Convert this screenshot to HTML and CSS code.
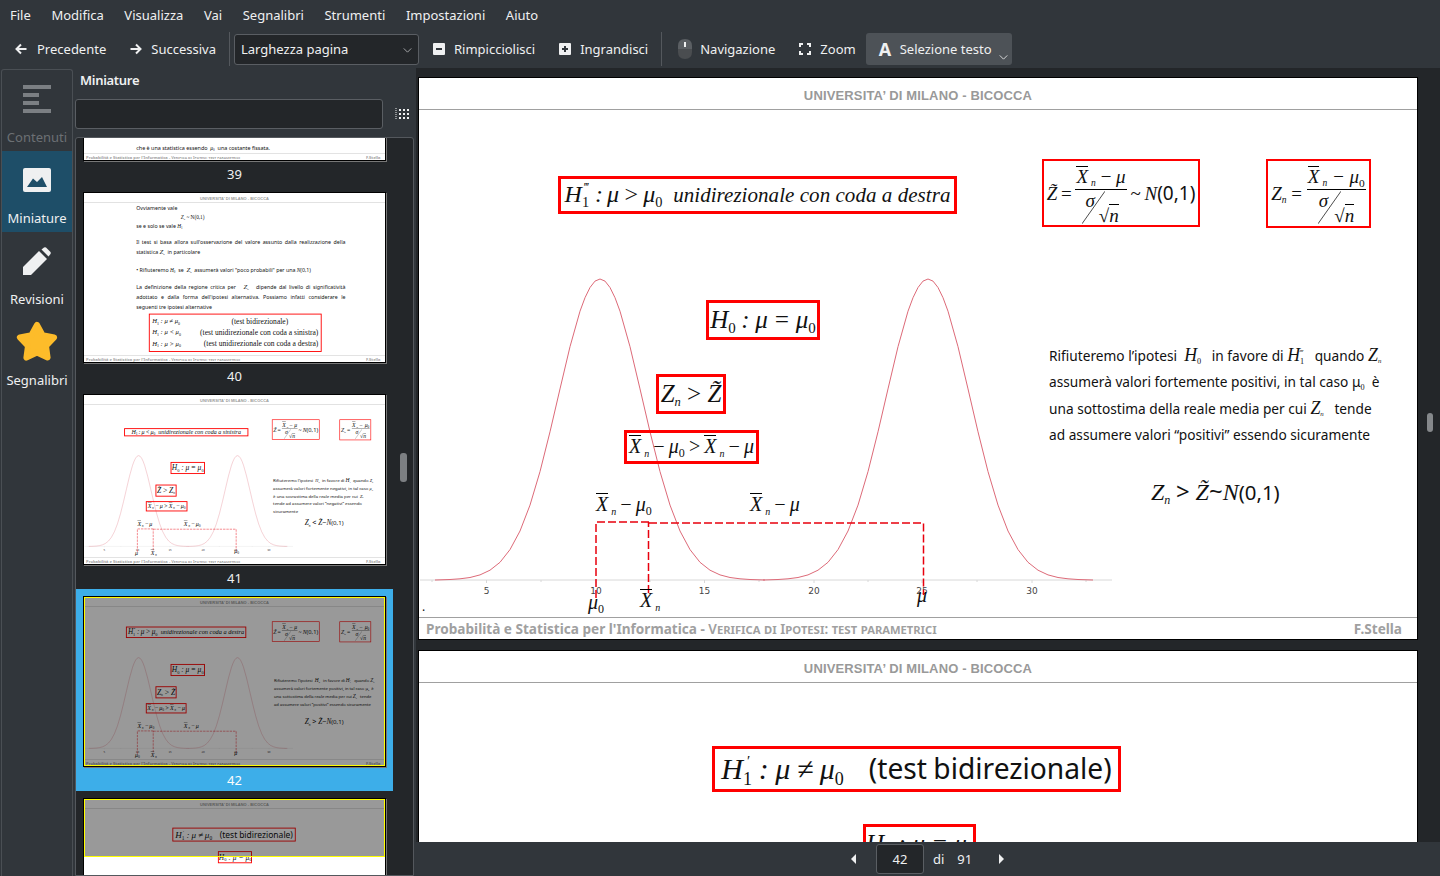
FILE: index.html
```html
<!DOCTYPE html>
<html lang="it">
<head>
    <meta charset="UTF-8">
    <meta name="viewport" content="width=device-width, initial-scale=1.0">
    <title>Okular</title>
    <link rel="stylesheet" href="styles.css">
</head>
<body>
    <svg class="defs" width="0" height="0">
        <defs>
            <path id="bell" d="M-165 0L-150-.5L-140-1.2L-130-2.5L-120-5.1L-110-9.8L-100-17.7L-90-30.4L-80-49L-70-74.9L-60-108.4L-50-148.2L-40-191.1L-30-233.3L-20-268.8L-15-282.3L-10-292.5L-5-298.9L0-301L5-298.9L10-292.5L15-282.3L20-268.8L30-233.3L40-191.1L50-148.2L60-108.4L70-74.9L80-49L90-30.4L100-17.7L110-9.8L120-5.1L130-2.5L140-1.2L150-.5L165 0"/>
            <g id="plot">
                <path class="axis" d="M1 502H693M13 502v2M67.500 502v3M122 502v2M177 502v3M231 502v2M285.500 502v3M340 502v2M395 502v3M449 502v2M503 502v3M558 502v2M613 502v3M667 502v2"/>
                <use class="curve" href="#bell" x="181" y="502"/>
                <use class="curve" href="#bell" x="509" y="502"/>
                <text class="tick" x="67.500" y="516">5</text>
                <text class="tick" x="177" y="516">10</text>
                <text class="tick" x="285.500" y="516">15</text>
                <text class="tick" x="395" y="516">20</text>
                <text class="tick" x="503" y="516">25</text>
                <text class="tick" x="613" y="516">30</text>
                <path class="dash" d="M177 520V444H230M229.500 515V444M230 445H504.500V517"/>
            </g>
        </defs>
    </svg>

    <nav class="menubar">
        <span>File</span><span>Modifica</span><span>Visualizza</span><span>Vai</span><span>Segnalibri</span><span>Strumenti</span><span>Impostazioni</span><span>Aiuto</span>
    </nav>

    <div class="toolbar">
        <div class="tool tool-prev">
            <svg class="ico" viewBox="0 0 12 12"><path class="ico-line" d="M11.500 6H1.500M6 1.500L1.500 6L6 10.500"/></svg>
            Precedente
        </div>
        <div class="tool tool-next">
            <svg class="ico" viewBox="0 0 12 12"><path class="ico-line" d="M.5 6H10.500M6 1.500L10.500 6L6 10.500"/></svg>
            Successiva
        </div>
        <i class="sep"></i>
        <div class="combo">Larghezza pagina
            <svg class="combo-arrow" viewBox="0 0 10 6"><path d="M.5 .5L5 5L9.500 .5"/></svg>
        </div>
        <div class="tool tool-minus">
            <svg class="ico" viewBox="0 0 12 12"><rect class="ico-fill" width="12" height="12" rx="1"/><rect class="ico-cut" x="3" y="5" width="6" height="2"/></svg>
            Rimpicciolisci
        </div>
        <div class="tool tool-plus">
            <svg class="ico" viewBox="0 0 12 12"><rect class="ico-fill" width="12" height="12" rx="1"/><path class="ico-cut" d="M3 5H5V3H7V5H9V7H7V9H5V7H3Z"/></svg>
            Ingrandisci
        </div>
        <i class="sep sep-two"></i>
        <div class="tool tool-nav">
            <svg class="ico-mouse" viewBox="0 0 14 20"><path class="mouse-top" d="M0 10V7Q0 0 7 0T14 7V10Z"/><path class="mouse-low" d="M0 10H14V13Q14 20 7 20T0 13Z"/><rect class="ico-fill" x="6" y="3" width="2" height="5"/></svg>
            Navigazione
        </div>
        <div class="tool tool-zoom">
            <svg class="ico" viewBox="0 0 12 12"><path class="ico-line" d="M4 1H1V4M8 1H11V4M4 11H1V8M8 11H11V8"/></svg>
            Zoom
        </div>
        <div class="tool tool-select">
            <span class="glyph-a">A</span>
            Selezione testo
            <svg class="select-arrow" viewBox="0 0 10 6"><path d="M.5 .5L5 5L9.500 .5"/></svg>
        </div>
    </div>

    <div class="main">
        <aside class="sidebar">
            <div class="side-tab is-off">
                <svg class="side-ico" viewBox="0 0 28 28"><path class="toc" d="M0 0H28V4H0ZM0 8H16V12H0ZM0 16H16V20H0ZM0 24H28V28H0Z"/></svg>
                <span>Contenuti</span>
            </div>
            <div class="side-tab is-on">
                <svg class="side-ico side-ico-img" viewBox="0 0 28 24"><rect class="ico-fill" width="28" height="24" rx="2"/><path class="img-cut" d="M4 19L10 10.500L14 14L19 9L24 19Z"/></svg>
                <span>Miniature</span>
            </div>
            <div class="side-tab">
                <svg class="side-ico" viewBox="0 0 28 28"><path class="ico-fill" d="M0 28V20L16 4L24 12L8 28Z"/><path class="ico-fill" d="M18.500 2.500L21 .5Q22 0 23 .5L27.500 5Q28 6 27.500 7L25.500 9.500Z"/></svg>
                <span>Revisioni</span>
            </div>
            <div class="side-tab tab-star">
                <svg class="side-star" viewBox="0 0 42 43"><polygon class="star" points="21,5 26.600,15.300 38.100,17.400 30,25.900 31.600,37.600 21,32.500 10.400,37.600 12,25.900 3.900,17.400 15.400,15.300"/></svg>
                <span>Segnalibri</span>
            </div>
        </aside>

        <section class="panel">
            <h2 class="panel-title">Miniature</h2>
            <div class="search-row">
                <div class="search-box"></div>
                <svg class="grid-ico" viewBox="0 0 14 12"><path d="M1 0V1M1 2V3M1 4V5M1 6V7M1 8V9M1 10V11" class="grid-dots"/><path class="ico-fill" d="M4 1H6V3H4ZM8 1H10V3H8ZM12 1H14V3H12ZM4 5H6V7H4ZM8 5H10V7H8ZM12 5H14V7H12ZM4 9H6V11H4ZM8 9H10V11H8ZM12 9H14V11H12Z"/></svg>
            </div>

            <div class="thumbs">
                <div class="thumb-list">
                    <div class="thumb-item">
                        <div class="thumb">
                            <div class="slide">
                                <p class="t39">che è una statistica essendo &nbsp;<span class="m">μ</span><sub class="sn">0</sub>&nbsp; una costante fissata.</p>
                                <div class="slide-foot"><span>Probabilità e Statistica per l'Informatica - <span class="caps">Verifica di Ipotesi: test parametrici</span></span><span>F.Stella</span></div>
                            </div>
                        </div>
                        <div class="thumb-num">39</div>
                    </div>

                    <div class="thumb-item">
                        <div class="thumb">
                            <div class="slide">
                                <div class="slide-head">UNIVERSITA’ DI MILANO - BICOCCA</div>
                                <div class="t40">
                                    <p class="t40-tight">Ovviamente vale</p>
                                    <p class="t40-tight t40-mid"><span class="m">Z</span><sub class="sn m">n</sub> ~ N(0,1)</p>
                                    <p class="t40-tight">se e solo se vale <span class="m">H</span><sub class="sn">1</sub></p>
                                    <p class="t40-gap t40-just">Il test si basa allora sull'osservazione del valore assunto dalla realizzazione della</p>
                                    <p>statistica <span class="m big">Z</span><sub class="sn m">n</sub> &nbsp;in particolare</p>
                                    <p class="t40-low">• Rifiuteremo <span class="m">H</span><sub class="sn">0</sub> &nbsp;se &nbsp;<span class="m big">Z</span><sub class="sn m">n</sub> &nbsp;assumerà valori "poco probabili" per una <span class="m">N</span>(0,1)</p>
                                    <p class="t40-gap t40-just">La definizione della regione critica per &nbsp;&nbsp;<span class="m big">Z</span><sub class="sn m">n</sub> &nbsp;&nbsp;dipende dal livello di significatività</p>
                                    <p class="t40-just">adottato e dalla forma dell'ipotesi alternativa. Possiamo infatti considerare le</p>
                                    <p>seguenti tre ipotesi alternative</p>
                                </div>
                                <div class="fbox t40-box">
                                    <p class="t40-row"><span><span class="m">H</span><sub class="sn">1</sub><span class="m"> : μ ≠ μ</span><sub class="sn">0</sub></span><span class="t40-c t40-one">(test bidirezionale)</span></p>
                                    <p class="t40-row"><span><span class="m">H</span><sub class="sn">1</sub><span class="m"> : μ &lt; μ</span><sub class="sn">0</sub></span><span class="t40-c">(test unidirezionale con coda a sinistra)</span></p>
                                    <p class="t40-row"><span><span class="m">H</span><sub class="sn">1</sub><span class="m"> : μ &gt; μ</span><sub class="sn">0</sub></span><span class="t40-c">(test unidirezionale con coda a destra)</span></p>
                                </div>
                                <div class="slide-foot"><span>Probabilità e Statistica per l'Informatica - <span class="caps">Verifica di Ipotesi: test parametrici</span></span><span>F.Stella</span></div>
                            </div>
                        </div>
                        <div class="thumb-num">40</div>
                    </div>

                    <div class="thumb-item">
                        <div class="thumb">
                            <div class="slide">
                                <div class="slide-head">UNIVERSITA’ DI MILANO - BICOCCA</div>
                                <svg class="plot" viewBox="0 0 998 561"><use href="#plot"/></svg>
                                <div class="fbox f-top f-top-left"><span class="m">H</span><sub class="sn">1</sub><span class="m">&nbsp;: μ &lt; μ</span><sub class="sn">0</sub><span class="m words">&nbsp; unidirezionale con coda a sinistra</span></div>
                                <div class="fbox f-tilde"><span class="m">Z̃</span>&nbsp;=&nbsp;<span class="frac"><span class="num"><span class="m bar">X</span><sub class="sn m">n</sub><span class="m">&nbsp;− μ</span></span><span class="den"><span class="m">σ</span><span class="root">√<span class="m radic">n</span></span><svg class="slash" viewBox="0 0 24 34"><path d="M24 0L0 34"/></svg></span></span>&nbsp;~&nbsp;<span class="m">N</span><span class="paren">(0,1)</span></div>
                                <div class="fbox f-zn"><span class="m">Z</span><sub class="sn m">n</sub>&nbsp;=&nbsp;<span class="frac"><span class="num"><span class="m bar">X</span><sub class="sn m">n</sub><span class="m">&nbsp;− μ</span><sub class="sn">0</sub></span><span class="den"><span class="m">σ</span><span class="root">√<span class="m radic">n</span></span><svg class="slash" viewBox="0 0 24 34"><path d="M24 0L0 34"/></svg></span></span></div>
                                <div class="fbox f-h0"><span class="m">H</span><sub class="sn">0</sub><span class="m">&nbsp;: μ = μ</span><sub class="sn">0</sub></div>
                                <div class="fbox f-zgt f-zgt-left"><span class="m">Z̃</span>&nbsp;&gt;&nbsp;<span class="m">Z</span><sub class="sn m">n</sub></div>
                                <div class="fbox f-x f-x-left"><span class="m bar">X</span><sub class="sn m">n</sub><span class="m">&nbsp;− μ &gt;&nbsp;</span><span class="m bar">X</span><sub class="sn m">n</sub><span class="m">&nbsp;− μ</span><sub class="sn">0</sub></div>
                                <div class="lab lab-a"><span class="m bar">X</span><sub class="sn m">n</sub><span class="m">&nbsp;− μ</span></div>
                                <div class="lab lab-b"><span class="m bar">X</span><sub class="sn m">n</sub><span class="m">&nbsp;− μ</span><sub class="sn">0</sub></div>
                                <div class="lab lab-c"><span class="m">μ</span></div>
                                <div class="lab lab-d"><span class="m bar">X</span><sub class="sn m">n</sub></div>
                                <div class="lab lab-e"><span class="m">μ</span><sub class="sn">0</sub></div>
                                <p class="para para-left">Rifiuteremo l’ipotesi &nbsp;<span class="m">H</span><sub class="sn">0</sub>&nbsp; in favore di <span class="m big">H</span><sub class="sn">1</sub> &nbsp;quando <span class="m">Z</span><sub class="sn m">n</sub><br>assumerà valori fortemente negativi, in tal caso <span class="m">μ</span><sub class="sn">0</sub><br>è una sovrastima della reale media per cui &nbsp;<span class="m">Z</span><sub class="sn m">n</sub><br>tende ad assumere valori “negativi” essendo<br>sicuramente</p>
                                <div class="lab f-end f-end-left"><span class="m">Z</span><sub class="sn m">n</sub>&nbsp;&lt;&nbsp;<span class="m">Z̃</span>~<span class="m">N</span><span class="paren">(0,1)</span></div>
                                <div class="slide-foot"><span>Probabilità e Statistica per l'Informatica - <span class="caps">Verifica di Ipotesi: test parametrici</span></span><span>F.Stella</span></div>
                            </div>
                        </div>
                        <div class="thumb-num">41</div>
                    </div>

                    <div class="thumb-item is-current">
                        <div class="thumb">
                            <div class="slide">
                                <div class="slide-head">UNIVERSITA’ DI MILANO - BICOCCA</div>
                                <svg class="plot" viewBox="0 0 998 561"><use href="#plot"/></svg>
                                <div class="fbox f-top"><span class="m">H</span><sub class="sn">1</sub><sup class="primes">‴</sup><span class="m">&nbsp;: μ &gt; μ</span><sub class="sn">0</sub><span class="m words">&nbsp; unidirezionale con coda a destra</span></div>
                                <div class="fbox f-tilde"><span class="m">Z̃</span>&nbsp;=&nbsp;<span class="frac"><span class="num"><span class="m bar">X</span><sub class="sn m">n</sub><span class="m">&nbsp;− μ</span></span><span class="den"><span class="m">σ</span><span class="root">√<span class="m radic">n</span></span><svg class="slash" viewBox="0 0 24 34"><path d="M24 0L0 34"/></svg></span></span>&nbsp;~&nbsp;<span class="m">N</span><span class="paren">(0,1)</span></div>
                                <div class="fbox f-zn"><span class="m">Z</span><sub class="sn m">n</sub>&nbsp;=&nbsp;<span class="frac"><span class="num"><span class="m bar">X</span><sub class="sn m">n</sub><span class="m">&nbsp;− μ</span><sub class="sn">0</sub></span><span class="den"><span class="m">σ</span><span class="root">√<span class="m radic">n</span></span><svg class="slash" viewBox="0 0 24 34"><path d="M24 0L0 34"/></svg></span></span></div>
                                <div class="fbox f-h0"><span class="m">H</span><sub class="sn">0</sub><span class="m">&nbsp;: μ = μ</span><sub class="sn">0</sub></div>
                                <div class="fbox f-zgt"><span class="m">Z</span><sub class="sn m">n</sub>&nbsp;&gt;&nbsp;<span class="m">Z̃</span></div>
                                <div class="fbox f-x"><span class="m bar">X</span><sub class="sn m">n</sub><span class="m">&nbsp;− μ</span><sub class="sn">0</sub><span class="m">&nbsp;&gt;&nbsp;</span><span class="m bar">X</span><sub class="sn m">n</sub><span class="m">&nbsp;− μ</span></div>
                                <div class="lab lab-a"><span class="m bar">X</span><sub class="sn m">n</sub><span class="m">&nbsp;− μ</span><sub class="sn">0</sub></div>
                                <div class="lab lab-b"><span class="m bar">X</span><sub class="sn m">n</sub><span class="m">&nbsp;− μ</span></div>
                                <div class="lab lab-c"><span class="m">μ</span><sub class="sn">0</sub></div>
                                <div class="lab lab-d"><span class="m bar">X</span><sub class="sn m">n</sub></div>
                                <div class="lab lab-e"><span class="m">μ</span></div>
                                <p class="para">Rifiuteremo l’ipotesi &nbsp;<span class="m big">H</span><sub class="sn">0</sub>&nbsp;&nbsp; in favore di <span class="m big">H</span><sub class="sn">1</sub><sup class="primes">‴</sup> quando <span class="m big">Z</span><sub class="sn m">n</sub><br>assumerà valori fortemente positivi, in tal caso μ<sub class="sn">0</sub>&nbsp; è<br>una sottostima della reale media per cui <span class="m big">Z</span><sub class="sn m">n</sub>&nbsp;&nbsp; tende<br>ad assumere valori “positivi” essendo sicuramente</p>
                                <div class="lab f-end"><span class="m">Z</span><sub class="sn m">n</sub>&nbsp;&gt;&nbsp;<span class="m">Z̃</span>~<span class="m">N</span><span class="paren">(0,1)</span></div>
                                <div class="slide-foot"><span>Probabilità e Statistica per l'Informatica - <span class="caps">Verifica di Ipotesi: test parametrici</span></span><span>F.Stella</span></div>
                            </div>
                            <div class="shade"></div>
                        </div>
                        <div class="thumb-num">42</div>
                    </div>

                    <div class="thumb-item">
                        <div class="thumb">
                            <div class="slide">
                                <div class="slide-head">UNIVERSITA’ DI MILANO - BICOCCA</div>
                                <div class="fbox f-bid"><span class="m">H</span><sub class="sn">1</sub><sup class="primes">′</sup><span class="m">&nbsp;: μ ≠ μ</span><sub class="sn">0</sub><span class="bid-text">(test bidirezionale)</span></div>
                                <div class="fbox f-h0b"><span class="m">H</span><sub class="sn">0</sub><span class="m">&nbsp;: μ = μ</span><sub class="sn">0</sub></div>
                            </div>
                            <div class="shade shade-part"></div>
                        </div>
                    </div>
                </div>
                <div class="thumbs-scroll"></div>
            </div>
        </section>

        <main class="viewer">
            <div class="pages">
                <div class="page">
                    <div class="slide">
                        <div class="slide-head">UNIVERSITA’ DI MILANO - BICOCCA</div>
                        <svg class="plot" viewBox="0 0 998 561"><use href="#plot"/></svg>
                        <div class="fbox f-top"><span class="m">H</span><sub class="sn">1</sub><sup class="primes">‴</sup><span class="m">&nbsp;: μ &gt; μ</span><sub class="sn">0</sub><span class="m words">&nbsp; unidirezionale con coda a destra</span></div>
                        <div class="fbox f-tilde"><span class="m">Z̃</span>&nbsp;=&nbsp;<span class="frac"><span class="num"><span class="m bar">X</span><sub class="sn m">n</sub><span class="m">&nbsp;− μ</span></span><span class="den"><span class="m">σ</span><span class="root">√<span class="m radic">n</span></span><svg class="slash" viewBox="0 0 24 34"><path d="M24 0L0 34"/></svg></span></span>&nbsp;~&nbsp;<span class="m">N</span><span class="paren">(0,1)</span></div>
                        <div class="fbox f-zn"><span class="m">Z</span><sub class="sn m">n</sub>&nbsp;=&nbsp;<span class="frac"><span class="num"><span class="m bar">X</span><sub class="sn m">n</sub><span class="m">&nbsp;− μ</span><sub class="sn">0</sub></span><span class="den"><span class="m">σ</span><span class="root">√<span class="m radic">n</span></span><svg class="slash" viewBox="0 0 24 34"><path d="M24 0L0 34"/></svg></span></span></div>
                        <div class="fbox f-h0"><span class="m">H</span><sub class="sn">0</sub><span class="m">&nbsp;: μ = μ</span><sub class="sn">0</sub></div>
                        <div class="fbox f-zgt"><span class="m">Z</span><sub class="sn m">n</sub>&nbsp;&gt;&nbsp;<span class="m">Z̃</span></div>
                        <div class="fbox f-x"><span class="m bar">X</span><sub class="sn m">n</sub><span class="m">&nbsp;− μ</span><sub class="sn">0</sub><span class="m">&nbsp;&gt;&nbsp;</span><span class="m bar">X</span><sub class="sn m">n</sub><span class="m">&nbsp;− μ</span></div>
                        <div class="lab lab-a"><span class="m bar">X</span><sub class="sn m">n</sub><span class="m">&nbsp;− μ</span><sub class="sn">0</sub></div>
                        <div class="lab lab-b"><span class="m bar">X</span><sub class="sn m">n</sub><span class="m">&nbsp;− μ</span></div>
                        <div class="lab lab-c"><span class="m">μ</span><sub class="sn">0</sub></div>
                        <div class="lab lab-d"><span class="m bar">X</span><sub class="sn m">n</sub></div>
                        <div class="lab lab-e"><span class="m">μ</span></div>
                        <div class="dot">.</div>
                        <p class="para">Rifiuteremo l’ipotesi &nbsp;<span class="m big">H</span><sub class="sn">0</sub>&nbsp;&nbsp; in favore di <span class="m big">H</span><sub class="sn">1</sub><sup class="primes">‴</sup> quando <span class="m big">Z</span><sub class="sn m">n</sub><br>assumerà valori fortemente positivi, in tal caso μ<sub class="sn">0</sub>&nbsp; è<br>una sottostima della reale media per cui <span class="m big">Z</span><sub class="sn m">n</sub>&nbsp;&nbsp; tende<br>ad assumere valori “positivi” essendo sicuramente</p>
                        <div class="lab f-end"><span class="m">Z</span><sub class="sn m">n</sub>&nbsp;&gt;&nbsp;<span class="m">Z̃</span>~<span class="m">N</span><span class="paren">(0,1)</span></div>
                        <div class="slide-foot"><span>Probabilità e Statistica per l'Informatica - <span class="caps">Verifica di Ipotesi: test parametrici</span></span><span>F.Stella</span></div>
                    </div>
                </div>
                <div class="page">
                    <div class="slide">
                        <div class="slide-head">UNIVERSITA’ DI MILANO - BICOCCA</div>
                        <div class="fbox f-bid"><span class="m">H</span><sub class="sn">1</sub><sup class="primes">′</sup><span class="m">&nbsp;: μ ≠ μ</span><sub class="sn">0</sub><span class="bid-text">(test bidirezionale)</span></div>
                        <div class="fbox f-h0b"><span class="m">H</span><sub class="sn">0</sub><span class="m">&nbsp;: μ = μ</span><sub class="sn">0</sub></div>
                    </div>
                </div>
                <div class="view-scroll"></div>
            </div>
            <div class="pagebar">
                <svg class="pg-arrow" viewBox="0 0 5 10"><path d="M5 0V10L0 5Z"/></svg>
                <div class="pg-input">42</div>
                <span class="pg-di">di</span>
                <span class="pg-total">91</span>
                <svg class="pg-arrow pg-next" viewBox="0 0 5 10"><path d="M0 0V10L5 5Z"/></svg>
            </div>
        </main>
    </div>
</body>
</html>
```

FILE: styles.css
```css
/* General reset */
* {
    margin: 0;
    padding: 0;
    box-sizing: border-box;
}

body {
    width: 1440px;
    height: 876px;
    overflow: hidden;
    background: #31363b;
    color: #eff0f1;
    font-family: 'Noto Sans', sans-serif;
    font-size: 13px;
}

.defs {
    position: absolute;
}

/* Menu bar */
.menubar {
    display: flex;
    gap: 20.600px;
    height: 30px;
    padding-left: 10px;
    align-items: center;
}

/* Toolbar */
.toolbar {
    display: flex;
    align-items: center;
    height: 38px;
}

.tool {
    display: flex;
    align-items: center;
    gap: 10px;
    height: 32px;
    white-space: nowrap;
}

.tool-prev { margin-left: 15px; }
.tool-next { margin-left: 24px; gap: 9px; }
.tool-minus { margin-left: 14px; gap: 9px; }
.tool-plus { margin-left: 24px; gap: 9px; }
.tool-nav { margin-left: 16px; gap: 8px; }
.tool-zoom { margin-left: 24px; gap: 9px; }

.tool-select {
    position: relative;
    margin-left: 10px;
    width: 146px;
    padding-left: 13px;
    gap: 9px;
    background: #4d5257;
    border-radius: 3px;
}

.ico {
    width: 12px;
    height: 12px;
    flex-shrink: 0;
}

.ico-line {
    fill: none;
    stroke: #eff0f1;
    stroke-width: 2;
}

.ico-fill {
    fill: #eff0f1;
}

.ico-cut {
    fill: #31363b;
}

.ico-mouse {
    width: 14px;
    height: 20px;
}

.mouse-top { fill: #5b5f63; }
.mouse-low { fill: #4a4d50; }

.glyph-a {
    font-size: 18px;
    font-weight: 700;
    width: 12px;
    text-align: center;
}

.select-arrow {
    position: absolute;
    right: 4px;
    bottom: 5px;
    width: 9px;
    height: 5px;
    fill: none;
    stroke: #eff0f1;
}

.sep {
    width: 1px;
    height: 34px;
    margin-left: 13px;
    background: #54585d;
}

.sep-two {
    margin-left: 13px;
}

.combo {
    position: relative;
    width: 185px;
    height: 31px;
    margin-left: 4px;
    padding-left: 6px;
    line-height: 28px;
    background: #232629;
    border: 1px solid #5a5e63;
    border-radius: 3px;
}

.combo-arrow {
    position: absolute;
    right: 6px;
    top: 13px;
    width: 9px;
    height: 5px;
    fill: none;
    stroke: #b9bbbd;
}

/* Main area */
.main {
    display: flex;
    height: 808px;
}

/* Left sidebar with the tabs */
.sidebar {
    width: 72px;
    margin: 1px 0 0 1px;
    border: 1px solid #4a4f54;
    border-bottom: 0;
    border-radius: 3px 3px 0 0;
    flex-shrink: 0;
}

.side-tab {
    display: flex;
    flex-direction: column;
    align-items: center;
    height: 81px;
    padding-top: 15px;
    white-space: nowrap;
}

.side-tab span {
    margin-top: auto;
    padding-bottom: 5px;
}

.side-ico {
    width: 28px;
    height: 28px;
}

.side-ico-img {
    height: 24px;
}

.is-off {
    color: #6c7074;
    height: 82px;
    margin-top: -1px;
    padding-top: 16px;
}

.toc {
    fill: #7b7f83;
}

.is-on {
    background: #1e4e68;
    padding-top: 17px;
}

.img-cut {
    fill: #1e4e68;
}

.tab-star {
    padding-top: 7px;
}

.side-star {
    width: 42px;
    height: 43px;
}

.star {
    fill: #fdbc2a;
    stroke: #fdbc2a;
    stroke-width: 6;
    stroke-linejoin: round;
}

/* Thumbnail panel */
.panel {
    display: flex;
    flex-direction: column;
    width: 343px;
    padding: 0 2px;
    flex-shrink: 0;
}

.panel-title {
    height: 31px;
    padding: 2px 0 0 5px;
    font-size: 13px;
    font-weight: 600;
    letter-spacing: -.3px;
    line-height: 20px;
}

.search-row {
    display: flex;
    align-items: center;
    height: 30px;
}

.search-box {
    width: 308px;
    height: 30px;
    background: #232629;
    border: 1px solid #5a5e63;
    border-radius: 3px;
}

.grid-ico {
    width: 14px;
    height: 12px;
    margin-left: 12px;
}

.grid-dots {
    stroke: #eff0f1;
    fill: none;
}

.thumbs {
    position: relative;
    flex: 1;
    margin-top: 8px;
    background: #232629;
    border: 1px solid #54585d;
    border-radius: 3px 3px 0 0;
    overflow: hidden;
}

.thumb-list {
    width: 317px;
    margin-top: -155px;
}

.thumb-item {
    height: 202px;
    padding-top: 7px;
}

.is-current {
    background: #3daee9;
}

.thumb {
    position: relative;
    width: 303px;
    height: 171px;
    margin-left: 7px;
    background: #fff;
    border: 1px solid #000;
    overflow: hidden;
    box-shadow: 1px 1px 0 #777;
}

.thumb .slide {
    transform: scale(.3016);
    transform-origin: 0 0;
}

.thumb-num {
    height: 24px;
    line-height: 27px;
    text-align: center;
}

.is-current .thumb-num {
    color: #fcfcfc;
}

.shade {
    position: absolute;
    inset: 0;
    background: rgba(0, 0, 0, .4);
    border: 1px solid #ff0;
}

.shade-part {
    bottom: auto;
    height: 58px;
}

.thumbs-scroll {
    position: absolute;
    left: 324px;
    top: 315px;
    width: 7px;
    height: 29px;
    background: #7c7f82;
    border-radius: 3px;
}

/* Document view */
.viewer {
    display: flex;
    flex-direction: column;
    flex: 1;
    background: #232629;
    overflow: hidden;
}

.pages {
    position: relative;
    display: flex;
    flex-direction: column;
    flex: 1;
    gap: 10px;
    padding: 9px 0 0 2px;
    overflow: hidden;
}

.page {
    width: 1000px;
    height: 563px;
    border: 1px solid #000;
    background: #fff;
    flex-shrink: 0;
}

.view-scroll {
    position: absolute;
    left: 1011px;
    top: 345px;
    width: 6px;
    height: 19px;
    background: #85888b;
    border-radius: 3px;
}

.pagebar {
    display: flex;
    align-items: center;
    height: 34px;
    padding-left: 435px;
    background: #31363b;
    flex-shrink: 0;
}

.pg-arrow {
    width: 5px;
    height: 10px;
    fill: #eff0f1;
}

.pg-next {
    margin-left: 27px;
}

.pg-input {
    width: 48px;
    height: 30px;
    margin-left: 20px;
    line-height: 29px;
    text-align: center;
    background: #232629;
    border: 1px solid #5a5e63;
    border-radius: 3px;
}

.pg-di { margin-left: 9px; }
.pg-total { margin-left: 13px; }

/* Slide canvas: formulas are placed freely on it */
.slide {
    position: relative;
    width: 998px;
    height: 561px;
    background: #fff;
    color: #111;
    overflow: hidden;
}

.slide-head {
    height: 32px;
    font-family: 'Liberation Sans', sans-serif;
    font-size: 13px;
    font-weight: 700;
    line-height: 35px;
    text-align: center;
    color: #999;
    border-bottom: 1px solid #a0a0a0;
    letter-spacing: .15px;
}

.slide-foot {
    position: absolute;
    left: 0;
    right: 0;
    bottom: 0;
    display: flex;
    justify-content: space-between;
    height: 22px;
    padding: 0 15px 0 7px;
    border-top: 1px solid #a0a0a0;
    font-size: 13.600px;
    font-weight: 700;
    line-height: 22px;
    color: #a0a0a0;
}

.caps {
    font-variant: small-caps;
    font-weight: 600;
}

.plot {
    position: absolute;
    left: 0;
    top: 0;
    width: 998px;
    height: 561px;
}

.axis {
    fill: none;
    stroke: #d8d8d8;
}

.curve {
    fill: none;
    stroke: #dd6a78;
}

.dash {
    fill: none;
    stroke: #e8000d;
    stroke-width: 1.5;
    stroke-dasharray: 8 3;
}

.tick {
    font-family: 'DejaVu Sans', sans-serif;
    font-size: 9px;
    text-anchor: middle;
    fill: #444;
}

/* Math pieces */
.m {
    font-family: 'Liberation Serif', serif;
    font-style: italic;
}

.sn {
    font-family: 'Liberation Serif', serif;
    font-size: .6em;
    vertical-align: -.35em;
    line-height: 0;
}

.sn.m {
    font-size: .5em;
}

.primes {
    font-size: .5em;
    margin: 0 2px 0 -5px;
    vertical-align: .9em;
    line-height: 0;
}

.para .primes {
    margin-right: 8px;
}

.bar {
    display: inline-block;
    border-top: 1px solid #000;
    line-height: 1;
}

.bar + .sn {
    margin-left: 3px;
}

.big {
    font-size: 1.300em;
    line-height: 0;
}

.words {
    font-size: 21px;
    letter-spacing: .05px;
    word-spacing: 0;
}

.paren {
    font-family: 'Noto Sans', sans-serif;
    font-size: .85em;
}

.fbox {
    position: absolute;
    display: block;
    text-align: center;
    white-space: nowrap;
    font-family: 'Liberation Serif', serif;
    border: 3px solid #f00;
    color: #111;
}

.f-top { left: 139px; top: 98px; width: 399px; height: 38px; font-size: 24px; line-height: 31px; word-spacing: -2px; }
.f-top-left { left: 133px; top: 110px; width: 412px; height: 27px; font-size: 20px; line-height: 21px; }
.f-top-left .words { font-size: 20px; }
.f-tilde { left: 623px; top: 81px; width: 158px; height: 68px; font-size: 19px; border-width: 2px; line-height: 64px; word-spacing: -1px; }
.f-tilde .paren { font-size: 1em; }
.f-zn { left: 847px; top: 81px; width: 105px; height: 69px; font-size: 19px; border-width: 2px; line-height: 65px; }
.f-h0 { left: 287px; top: 222px; width: 114px; height: 40px; font-size: 25px; line-height: 34px; word-spacing: -.7px; }
.f-zgt { left: 237px; top: 296px; width: 70px; height: 40px; font-size: 25px; line-height: 34px; }
.f-zgt-left { top: 297px; }
.f-x { left: 205px; top: 352px; width: 135px; height: 34px; font-size: 20px; line-height: 27px; word-spacing: -2px; }
.f-x-left { width: 138px; }

.frac {
    display: inline-flex;
    flex-direction: column;
    vertical-align: middle;
    line-height: 1;
}

.num {
    padding: 0 1px 3px;
    border-bottom: 1px solid #000;
    text-align: center;
}

.den {
    position: relative;
    display: flex;
    height: 35px;
    padding-left: 10px;
    gap: 4px;
}

.f-zn .den {
    padding-left: 12px;
    gap: 6px;
}

.den .m:first-child {
    margin-top: 1px;
}

.root {
    align-self: flex-end;
}

.radic {
    border-top: 1px solid #000;
}

.slash {
    position: absolute;
    left: 7px;
    top: 1px;
    width: 23px;
    height: 33px;
    fill: none;
    stroke: #444;
}

.f-zn .slash {
    left: 11px;
}

.lab {
    position: absolute;
    font-size: 20px;
    white-space: nowrap;
    line-height: 1.1;
    word-spacing: -2px;
}

.lab-a { left: 177px; top: 415px; }
.lab-b { left: 331px; top: 415px; }
.lab-c { left: 169px; top: 513px; }
.lab-d { left: 221px; top: 511px; }
.lab-e { left: 498px; top: 506px; }

.dot {
    position: absolute;
    left: 3px;
    top: 520px;
    font-size: 12px;
}

.f-end { left: 732px; top: 400px; font-size: 24px; word-spacing: -.5px; }
.f-end-left { top: 410px; font-size: 24px; }

.para {
    position: absolute;
    left: 630px;
    top: 265px;
    font-size: 13.700px;
    line-height: 26.300px;
    white-space: nowrap;
}

.para-left {
    left: 627px;
    top: 270px;
    font-size: 14.200px;
    line-height: 25px;
}

/* Second page and the smaller slides in the thumbnails */
.f-bid { left: 293px; top: 95px; width: 409px; height: 46px; font-size: 30px; line-height: 38px; word-spacing: -1px; }

.bid-text {
    margin-left: 25px;
    font-family: 'Noto Sans', sans-serif;
    font-size: 28.200px;
}

.f-h0b { left: 444px; top: 173px; width: 113px; height: 40px; font-size: 25px; line-height: 34px; }

.t39 {
    position: absolute;
    left: 173px;
    top: 508px;
    font-size: 18px;
}

.t40 {
    position: absolute;
    left: 173px;
    top: 37px;
    width: 694px;
    font-size: 17.500px;
    line-height: 33px;
}

.t40-tight {
    line-height: 29px;
}

.t40-mid {
    font-family: 'Liberation Serif', serif;
    padding-left: 148px;
}

.t40-gap {
    margin-top: 21px;
}

.t40-low {
    margin-top: 27px;
}

.t40-just {
    text-align: justify;
    text-align-last: justify;
}

.t40-box {
    left: 215px;
    top: 400px;
    width: 573px;
    height: 127px;
    padding: 3px 8px;
    font-size: 22px;
    line-height: 37px;
    text-align: left;
}

.t40-row {
    display: flex;
    justify-content: space-between;
}

.t40-c {
    font-size: 25px;
}

.t40-one {
    margin-right: 100px;
}
```
